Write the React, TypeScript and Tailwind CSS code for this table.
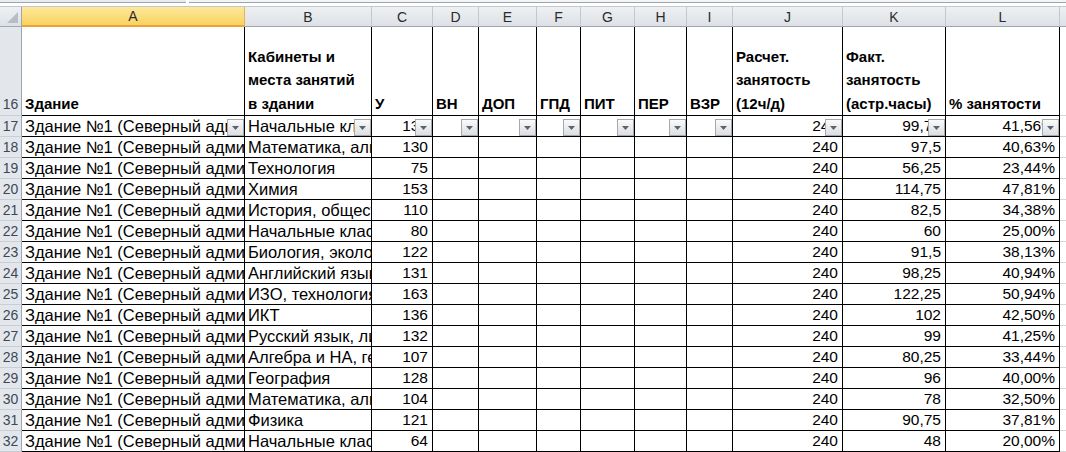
import React from "react";

type Row = {
  n: number;
  b: string;
  c: string;
  j: string;
  k: string;
  l: string;
};

const building = "Здание №1 (Северный административный корпус)";

const rows: Row[] = [
  { n: 17, b: "Начальные классы", c: "130", j: "240", k: "99,75", l: "41,56%" },
  { n: 18, b: "Математика, алгебра", c: "130", j: "240", k: "97,5", l: "40,63%" },
  { n: 19, b: "Технология", c: "75", j: "240", k: "56,25", l: "23,44%" },
  { n: 20, b: "Химия", c: "153", j: "240", k: "114,75", l: "47,81%" },
  { n: 21, b: "История, обществознание", c: "110", j: "240", k: "82,5", l: "34,38%" },
  { n: 22, b: "Начальные классы", c: "80", j: "240", k: "60", l: "25,00%" },
  { n: 23, b: "Биология, экология", c: "122", j: "240", k: "91,5", l: "38,13%" },
  { n: 24, b: "Английский язык", c: "131", j: "240", k: "98,25", l: "40,94%" },
  { n: 25, b: "ИЗО, технология", c: "163", j: "240", k: "122,25", l: "50,94%" },
  { n: 26, b: "ИКТ", c: "136", j: "240", k: "102", l: "42,50%" },
  { n: 27, b: "Русский язык, литература", c: "132", j: "240", k: "99", l: "41,25%" },
  { n: 28, b: "Алгебра и НА, геометрия", c: "107", j: "240", k: "80,25", l: "33,44%" },
  { n: 29, b: "География", c: "128", j: "240", k: "96", l: "40,00%" },
  { n: 30, b: "Математика, алгебра", c: "104", j: "240", k: "78", l: "32,50%" },
  { n: 31, b: "Физика", c: "121", j: "240", k: "90,75", l: "37,81%" },
  { n: 32, b: "Начальные классы", c: "64", j: "240", k: "48", l: "20,00%" },
];

const letters = ["A", "B", "C", "D", "E", "F", "G", "H", "I", "J", "K", "L"];

const gridCols =
  "grid grid-cols-[22px_223px_127px_61px_46px_58px_44px_54px_52px_46px_110px_103px_114px_1fr]";

function FilterButton() {
  return (
    <span className="absolute right-0 top-[3px] flex h-[17px] w-[17px] items-center justify-center border border-[#a6aab0] bg-linear-to-b from-[#fafafa] to-[#dcdee2]">
      <svg width="7" height="4" viewBox="0 0 7 4">
        <path d="M0 0h7L3.5 4z" fill="#5e636b" />
      </svg>
    </span>
  );
}

function RowHeader({ n, tall }: { n: number; tall?: boolean }) {
  return (
    <div
      className={`flex items-end justify-center border-r border-b border-r-[#9ea6b0] border-b-[#c9ced5] bg-[#e3e7ec] text-[14px] text-[#3d4756] ${
        tall ? "h-[89px] pb-[1px]" : "h-[21px]"
      }`}
    >
      <span className="leading-[20px]">{n}</span>
    </div>
  );
}

function HeadCell({ lines }: { lines: string[] }) {
  return (
    <div className="flex h-[89px] flex-col justify-end overflow-hidden whitespace-nowrap border-r border-b border-black pl-[3px] text-[15px] font-bold leading-[23.5px] text-black">
      {lines.map((l) => (
        <span key={l}>{l}</span>
      ))}
    </div>
  );
}

function TextCell({ value, filter }: { value: string; filter?: boolean }) {
  return (
    <div className="relative h-[21px] overflow-hidden whitespace-nowrap border-r border-b border-black pl-[3px] text-[16.5px] leading-[20px] text-black">
      {value}
      {filter && <FilterButton />}
    </div>
  );
}

function NumCell({ value, filter }: { value: string; filter?: boolean }) {
  return (
    <div className="relative h-[21px] overflow-hidden whitespace-nowrap border-r border-b border-black pr-[4px] text-right text-[15.5px] leading-[20px] text-black">
      {value}
      {filter && <FilterButton />}
    </div>
  );
}

function Filler({ tall }: { tall?: boolean }) {
  return <div className={`border-b border-[#d8d8d8] ${tall ? "h-[89px]" : "h-[21px]"}`} />;
}

export default function App() {
  return (
    <div className="h-[452px] w-[1066px] overflow-hidden bg-white font-['Liberation_Sans',Arial,sans-serif]">
      <div className="h-[7px] border-b border-[#c3c8cf] bg-white">
        <div className="flex h-[3px]">
          <div className="w-[186px] border-b border-[#9ea4ac] bg-[#e9ecf0]" />
          <div className="w-[3px]" />
          <div className="flex-1 border-b border-[#9ea4ac] bg-[#f4f5f7]" />
        </div>
      </div>

      {/* column letters */}
      <div className={`${gridCols} h-[20px]`}>
        <div className="relative border-r border-b border-[#9ea6b0] bg-linear-to-b from-[#eef0f3] to-[#dde1e6]">
          <svg className="absolute bottom-[3px] right-[3px]" width="11" height="11" viewBox="0 0 11 11">
            <path d="M11 0v11H0z" fill="#b8bdc4" />
          </svg>
        </div>
        {letters.map((c) => (
          <div
            key={c}
            className={`flex items-center justify-center border-r text-[14px] leading-none text-[#2b2b2b] ${
              c === "A"
                ? "border-b-2 border-r-[#e3b45a] border-b-[#e9a43a] bg-linear-to-b from-[#fde99a] to-[#f9d25f]"
                : "border-b border-r-[#c2c8cf] border-b-[#9ea6b0] bg-linear-to-b from-[#eef0f3] to-[#dde1e6]"
            }`}
          >
            {c}
          </div>
        ))}
        <div className="border-b border-[#9ea6b0] bg-linear-to-b from-[#eef0f3] to-[#dde1e6]" />
      </div>

      {/* header row 16 */}
      <div className={gridCols}>
        <RowHeader n={16} tall />
        <HeadCell lines={["Здание"]} />
        <HeadCell lines={["Кабинеты и", "места занятий", "в здании"]} />
        <HeadCell lines={["У"]} />
        <HeadCell lines={["ВН"]} />
        <HeadCell lines={["ДОП"]} />
        <HeadCell lines={["ГПД"]} />
        <HeadCell lines={["ПИТ"]} />
        <HeadCell lines={["ПЕР"]} />
        <HeadCell lines={["ВЗР"]} />
        <HeadCell lines={["Расчет.", "занятость", "(12ч/д)"]} />
        <HeadCell lines={["Факт.", "занятость", "(астр.часы)"]} />
        <HeadCell lines={["% занятости"]} />
        <Filler tall />
      </div>

      {/* data rows */}
      {rows.map((r, i) => {
        const f = i === 0;
        return (
          <div key={r.n} className={gridCols}>
            <RowHeader n={r.n} />
            <TextCell value={building} filter={f} />
            <TextCell value={r.b} filter={f} />
            <NumCell value={r.c} filter={f} />
            <NumCell value="" filter={f} />
            <NumCell value="" filter={f} />
            <NumCell value="" filter={f} />
            <NumCell value="" filter={f} />
            <NumCell value="" filter={f} />
            <NumCell value="" filter={f} />
            <NumCell value={r.j} filter={f} />
            <NumCell value={r.k} filter={f} />
            <NumCell value={r.l} filter={f} />
            <Filler />
          </div>
        );
      })}
    </div>
  );
}
